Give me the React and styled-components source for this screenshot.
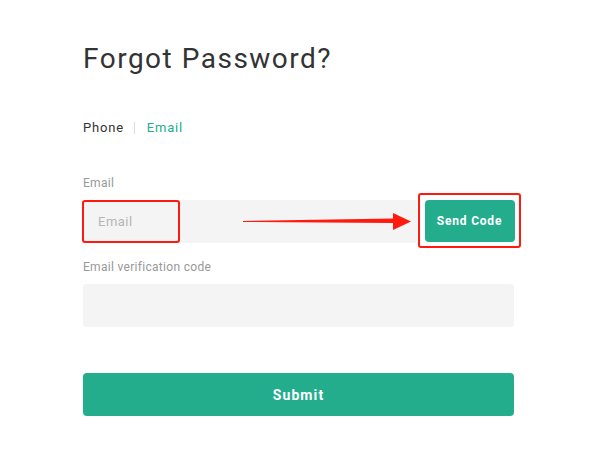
import styled, { createGlobalStyle } from 'styled-components';

const GlobalStyle = createGlobalStyle`
  body {
    margin: 0;
    background: #fff;
    font-family: Roboto, "Liberation Sans", sans-serif;
  }
`

const Page = styled.div`
  padding: 41px 85px 0 83px;
`
const Title = styled.h1`
  margin: 0;
  font-size: 28px;
  line-height: 36px;
  font-weight: 400;
  letter-spacing: 1.5px;
  color: #333;
`
const Tabs = styled.div`
  display: flex;
  align-items: center;
  margin-top: 41px;
  font-size: 13px;
  line-height: 20px;
  letter-spacing: 0.8px;
`
const Tab = styled.span`
  color: ${p => (p.active ? '#23ad8d' : '#333')};
`
const Divider = styled.span`
  width: 1px;
  height: 12px;
  background: #ddd;
  margin: 0 12px 0 10px;
`
const Field = styled.div`
  margin-top: ${p => p.top}px;
`
const Label = styled.label`
  display: block;
  font-size: 12px;
  line-height: 16px;
  letter-spacing: 0.3px;
  color: #999;
  margin-bottom: 9px;
`
const Row = styled.div`
  position: relative;
  display: flex;
  align-items: flex-start;
  gap: 1px;
`
const InputBox = styled.div`
  position: relative;
  flex: 1;
  height: 43px;
  background: #f4f4f4;
  border-radius: 3px;
`
const Input = styled.input`
  width: 100%;
  height: 100%;
  box-sizing: border-box;
  border: none;
  background: transparent;
  padding: 0 15px;
  font-family: inherit;
  font-size: 13px;
  letter-spacing: 0.5px;
  color: #333;
  outline: none;
  &::placeholder {
    color: #b5b5b5;
  }
`
const Mark = styled.span`
  position: absolute;
  left: -1px;
  top: 0;
  width: 98px;
  height: 43px;
  box-sizing: border-box;
  border: 2.5px solid #ff1a0f;
  border-radius: 3px;
  pointer-events: none;
`
const MarkFrame = styled.div`
  margin: -7px -7px -8px 0;
  padding: 4.5px;
  border: 2.5px solid #ff1a0f;
  border-radius: 3px;
`
const Button = styled.button`
  display: block;
  height: ${p => (p.small ? 42 : 43)}px;
  width: ${p => (p.small ? '90px' : '100%')};
  padding: 0;
  border: none;
  border-radius: 4px;
  background: #23ad8d;
  color: #fff;
  font-family: inherit;
  font-weight: 700;
  font-size: ${p => (p.small ? 12 : 14)}px;
  letter-spacing: ${p => (p.small ? 0.8 : 1.1)}px;
  cursor: pointer;
`
const Arrow = styled.svg`
  position: absolute;
  left: 160px;
  top: 12px;
  pointer-events: none;
`
const SubmitWrap = styled.div`
  margin-top: 46px;
`

export default function App() {
  return (
    <>
      <GlobalStyle />
      <Page>
        <Title>Forgot Password?</Title>
        <Tabs>
          <Tab>Phone</Tab>
          <Divider />
          <Tab active>Email</Tab>
        </Tabs>
        <Field top={37}>
          <Label>Email</Label>
          <Row>
            <InputBox>
              <Input placeholder="Email" />
              <Mark />
            </InputBox>
            <MarkFrame>
              <Button small>Send Code</Button>
            </MarkFrame>
            <Arrow width="172" height="20" viewBox="0 0 172 20">
              <polygon points="0,9 150,6.5 150,1 168,9.5 150,18 150,11 0,10" fill="#ff1a0f" />
            </Arrow>
          </Row>
        </Field>
        <Field top={16}>
          <Label>Email verification code</Label>
          <InputBox>
            <Input />
          </InputBox>
        </Field>
        <SubmitWrap>
          <Button>Submit</Button>
        </SubmitWrap>
      </Page>
    </>
  );
}
